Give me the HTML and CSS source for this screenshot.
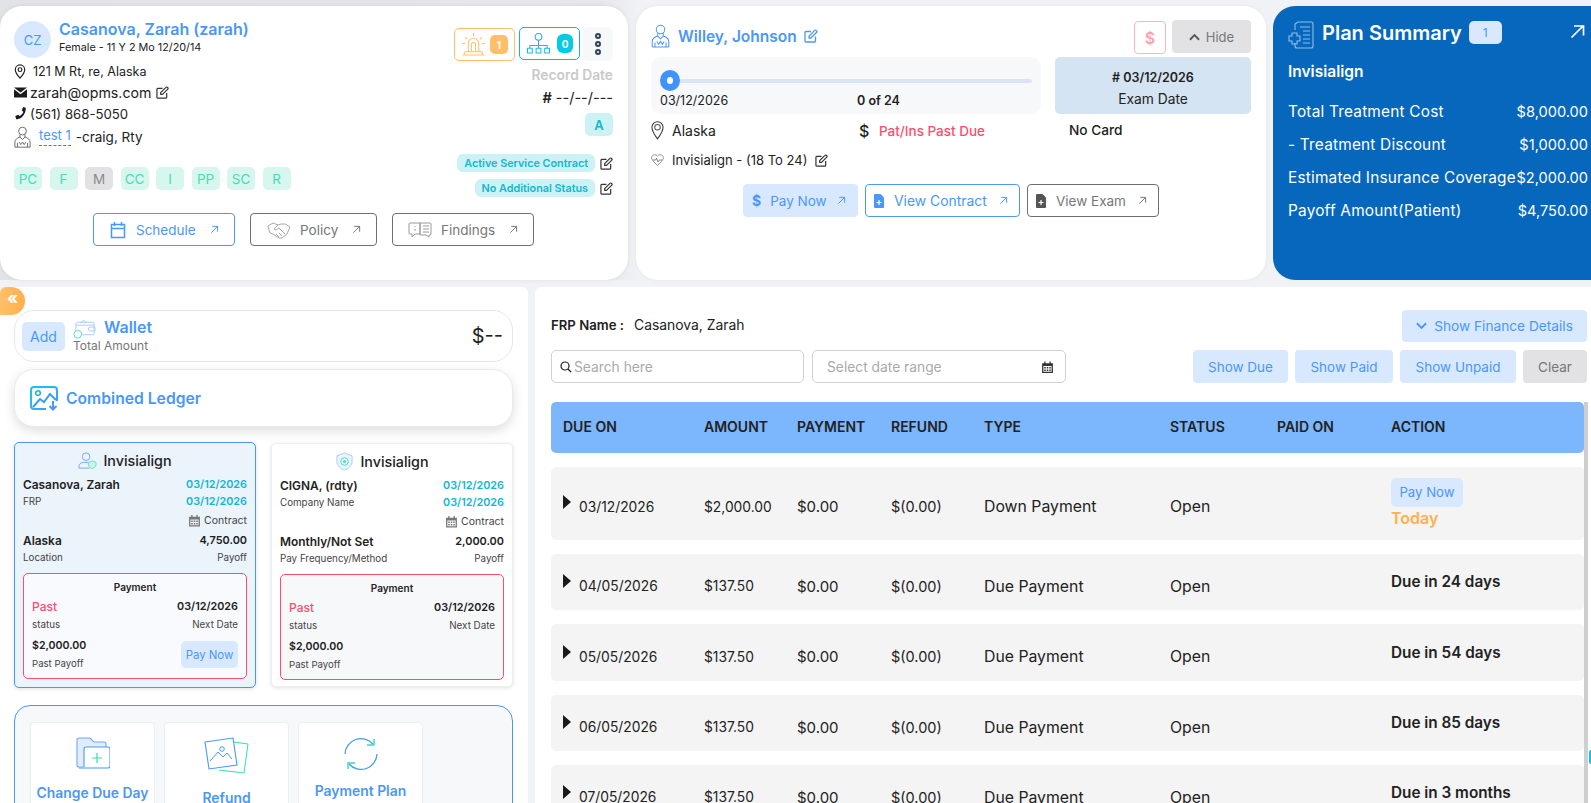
FILE: index.html
```html
<!DOCTYPE html>
<html lang="en">
<head>
<meta charset="utf-8">
<title>Patient Ledger</title>
<link rel="stylesheet" href="styles.css">
</head>
<body>
<svg class="defs" width="0" height="0" aria-hidden="true">
  <symbol id="edit" viewBox="0 0 14 14"><path d="M11.5 7.5V12a1 1 0 0 1-1 1H2a1 1 0 0 1-1-1V3.5a1 1 0 0 1 1-1h5M5 7.2 10.7 1.4a1 1 0 0 1 1.5 0l.5.5a1 1 0 0 1 0 1.4L7 9H5z" fill="none" stroke="currentColor" stroke-width="1.3" stroke-linejoin="round"/></symbol>
  <symbol id="ext" viewBox="0 0 10 10"><path d="M1.5 8.5 8.5 1.5M2.5 1.5h6v6" fill="none" stroke="currentColor" stroke-width="1.1"/></symbol>
  <symbol id="doc" viewBox="0 0 20 26"><circle cx="10" cy="6" r="4.6" fill="none" stroke="currentColor" stroke-width="1.1"/><path d="M7 10v3l3 3 3-3v-3M1 25v-6c0-3 3-5 6-6M19 25v-6c0-3-3-5-6-6M1 25h18M4 25v-5M16 25v-5M6 19l2 3 2-3 2 3 2-3" fill="none" stroke="currentColor" stroke-width="1.1"/></symbol>
  <symbol id="cal" viewBox="0 0 12 12"><path d="M1 2.5h2V1h1.2v1.5h3.6V1H9v1.5h2V11.5H1zM2.2 5v5.3h7.6V5z" fill="currentColor"/><path d="M3 6h1.4v1.4H3zM5.3 6h1.4v1.4H5.3zM7.6 6H9v1.4H7.6zM3 8.3h1.4v1.4H3zM5.3 8.3h1.4v1.4H5.3zM7.6 8.3H9v1.4H7.6z" fill="currentColor"/></symbol>
</svg>

<section class="top">
  <article class="card patient">
    <div class="patient-grid">
      <div class="patient-left">
        <div class="identity">
          <div class="avatar">CZ</div>
          <div>
            <div class="name">Casanova, Zarah (zarah)</div>
            <div class="sub">Female - 11 Y 2 Mo 12/20/14</div>
          </div>
        </div>
        <div class="info info-addr">
          <svg class="ico-addr" viewBox="0 0 12 16"><path d="M6 15S1 9.5 1 6a5 5 0 0 1 10 0c0 3.500-5 9-5 9z" fill="none" stroke="#222" stroke-width="1.300"/><circle cx="6" cy="6" r="2" fill="none" stroke="#222" stroke-width="1.300"/></svg>
          <span>121 M Rt, re, Alaska</span>
        </div>
        <div class="info info-mail">
          <svg class="ico-mail" viewBox="0 0 13 10"><path d="M0 0h13L6.500 5zM0 1.800l6.500 5 6.500-5V10H0z" fill="#1a1a1a"/></svg>
          <span>zarah@opms.com</span>
          <svg class="ico-edit"><use href="#edit"/></svg>
        </div>
        <div class="info info-phone">
          <svg class="ico-mail" viewBox="0 0 13 15"><path d="M12.500 1 9.500 0 8 4l1.800 1.500C9 7.800 7.500 9.500 5.500 10.500L4 9 .5 10.500 1.500 14c6 1 11.500-6 11-13z" fill="#1a1a1a"/></svg>
          <span>(561) 868-5050</span>
        </div>
        <div class="info info-doc">
          <svg class="ico-doc"><use href="#doc"/></svg>
          <span class="link-dash">test 1</span><span>-craig, Rty</span>
        </div>
        <div class="chips">
          <span class="chip">PC</span><span class="chip">F</span><span class="chip chip-off">M</span><span class="chip">CC</span><span class="chip">I</span><span class="chip">PP</span><span class="chip">SC</span><span class="chip">R</span>
        </div>
      </div>
      <div class="patient-right">
        <div class="alerts">
          <div class="alert alert-orange">
            <svg class="ico-siren" viewBox="0 0 24 24"><path d="M7 19V11a5 5 0 0 1 10 0v8M4 19h16l1.500 3h-19zM10 19v-7a2 2 0 0 1 4 0v7M12 1v3M4 5l2 2M20 5l-2 2M1 11h3M20 11h3" fill="none" stroke="#ffc069" stroke-width="1"/></svg>
            <span class="count count-orange">1</span>
          </div>
          <div class="alert alert-cyan">
            <svg class="ico-org" viewBox="0 0 26 24"><circle cx="13" cy="5" r="3.500" fill="none" stroke="#35a7ea" stroke-width="1.100"/><path d="M13 8.500V14M4 17v-3h18v3M13 14v3" fill="none" stroke="#35a7ea" stroke-width="1.100"/><path d="M1.500 17h5v5h-5zM10.500 17h5v5h-5zM19.500 17h5v5h-5z" fill="none" stroke="#13c0e0" stroke-width="1.100"/></svg>
            <span class="count count-cyan">0</span>
          </div>
          <div class="dots"><i></i><i></i><i></i></div>
        </div>
        <div class="record-label">Record Date</div>
        <div class="record-value"><b>#</b> --/--/---</div>
        <div class="tag-a">A</div>
        <div class="status-row"><span class="pill">Active Service Contract</span><svg class="ico-edit dark"><use href="#edit"/></svg></div>
        <div class="status-row"><span class="pill">No Additional Status</span><svg class="ico-edit dark"><use href="#edit"/></svg></div>
      </div>
    </div>
    <div class="patient-actions">
      <a class="btn btn-blue btn-sched">
        <svg class="b-ico" viewBox="0 0 16 18"><path d="M1.500 3.500h13v13h-13zM1.500 7.500h13M4.500 1v4M11.500 1v4" fill="none" stroke="currentColor" stroke-width="1.500"/></svg>
        <span>Schedule</span><svg class="ext"><use href="#ext"/></svg>
      </a>
      <a class="btn btn-grey btn-policy">
        <svg class="b-ico wide" viewBox="0 0 24 18"><path d="M1 5l5-3 5 2 3-1 4 0 5 3-3 7-5 4-3 0-6-4-3-1zM11 4 7 8l2 1 3-2 6 6M9 13l3 3M12 12l3 3" fill="none" stroke="#a8a8a8" stroke-width="1"/></svg>
        <span>Policy</span><svg class="ext"><use href="#ext"/></svg>
      </a>
      <a class="btn btn-grey btn-find">
        <svg class="b-ico wide" viewBox="0 0 24 18"><path d="M12 2H2a1 1 0 0 0-1 1v9a1 1 0 0 0 1 1h2v3l3-3h5zM12 2h10a1 1 0 0 1 1 1v10a1 1 0 0 1-1 1h-1v2l-3-2h-6zM7 5v1M7 8v2M15 5h6M15 8h6M15 11h6" fill="none" stroke="#9a9a9a" stroke-width="1"/></svg>
        <span>Findings</span><svg class="ext"><use href="#ext"/></svg>
      </a>
    </div>
  </article>

  <article class="card contract">
    <div class="contract-head">
      <div class="doctor">
        <svg class="ico-doctor"><use href="#doc"/></svg>
        <span class="doctor-name">Willey, Johnson</span>
        <svg class="ico-edit blue"><use href="#edit"/></svg>
      </div>
      <div class="head-btns">
        <span class="dollar-btn">$</span>
        <span class="hide-btn"><svg viewBox="0 0 12 8" class="chev"><path d="M1 7l5-5 5 5" fill="none" stroke="#555" stroke-width="2"/></svg>Hide</span>
      </div>
    </div>
    <div class="contract-grid">
      <div class="progress-box">
        <div class="track"><span class="knob"></span></div>
        <div class="progress-text"><span class="p-date">03/12/2026</span><b>0 of 24</b></div>
      </div>
      <div class="exam-box"><b># 03/12/2026</b><span>Exam Date</span></div>
    </div>
    <div class="meta">
      <div class="meta-loc">
        <svg class="ico-pin" viewBox="0 0 14 20"><path d="M7 19.500S1 11.500 1 7a6 6 0 0 1 12 0c0 4.500-6 12.500-6 12.500z" fill="none" stroke="#333" stroke-width="1.100"/><circle cx="7" cy="7" r="3" fill="none" stroke="#555" stroke-width="1.100"/></svg>
        <span>Alaska</span>
      </div>
      <div class="meta-due"><span class="big-dollar">$</span><span class="due-text">Pat/Ins Past Due</span></div>
      <div class="meta-card">No Card</div>
    </div>
    <div class="plan-row">
      <svg class="ico-heart" viewBox="0 0 14 14"><path d="M7 13 1.800 7.500C-.5 5 1 1.300 4 1.300c1.300 0 2.300.7 3 1.700.7-1 1.700-1.700 3-1.700 3 0 4.500 3.700 2.200 6.200z" fill="none" stroke="#888" stroke-width="1"/><path d="M2 7h3l1-2 1.500 4L9 7h3" fill="none" stroke="#5a5a5a" stroke-width=".8"/></svg>
      <span>Invisialign - (18 To 24)</span>
      <svg class="ico-edit dark"><use href="#edit"/></svg>
    </div>
    <div class="contract-actions">
      <a class="btn btn-fill btn-pay"><span class="pay-d">$</span><span>Pay Now</span><svg class="ext"><use href="#ext"/></svg></a>
      <a class="btn btn-blue btn-view"><svg class="file-ico" viewBox="0 0 10 14"><path d="M0 1a1 1 0 0 1 1-1h5.500L10 3.500V13a1 1 0 0 1-1 1H1a1 1 0 0 1-1-1z" fill="currentColor"/><path d="M5 6v5M2.500 8.500h5" stroke="#fff" stroke-width="1.200"/></svg><span>View Contract</span><svg class="ext"><use href="#ext"/></svg></a>
      <a class="btn btn-grey btn-exam"><svg class="file-ico" viewBox="0 0 10 14"><path d="M0 1a1 1 0 0 1 1-1h5.500L10 3.500V13a1 1 0 0 1-1 1H1a1 1 0 0 1-1-1z" fill="#555"/><path d="M5 6v5M2.500 8.500h5" stroke="#fff" stroke-width="1.200"/></svg><span>View Exam</span><svg class="ext"><use href="#ext"/></svg></a>
    </div>
  </article>

  <article class="summary">
    <div class="sum-head">
      <svg class="sum-ico" viewBox="0 0 26 28"><path d="M7 9V3l3-2h13a2 2 0 0 1 2 2v22a2 2 0 0 1-2 2H9a2 2 0 0 1-2-2v-3M12 6h10M15 10h7M15 14h7M15 18h7M15 22h7M4 12h5v3h3v5H9v3H4v-3H1v-5h3z" fill="none" stroke="#8fc0ea" stroke-width="1.100"/></svg>
      <h2>Plan Summary</h2>
      <span class="sum-badge">1</span>
      <svg class="sum-ext" viewBox="0 0 15 15"><path d="M1.500 13.500 13 2M4 2h9.500v9.500" fill="none" stroke="#fff" stroke-width="1.700"/></svg>
    </div>
    <div class="sum-plan">Invisialign</div>
    <dl class="sum-list">
      <div><dt>Total Treatment Cost</dt><dd>$8,000.00</dd></div>
      <div><dt>- Treatment Discount</dt><dd>$1,000.00</dd></div>
      <div><dt>Estimated Insurance Coverage</dt><dd>$2,000.00</dd></div>
      <div><dt>Payoff Amount(Patient)</dt><dd>$4,750.00</dd></div>
    </dl>
  </article>
</section>

<main class="main">
  <aside class="left">
    <button class="collapse" type="button">«</button>
    <div class="wallet">
      <span class="add">Add</span>
      <div class="wallet-text">
        <div class="wallet-top">
          <svg class="wallet-ico" viewBox="0 0 24 20"><path d="M3 14V5a2 2 0 0 1 2-2h16a1 1 0 0 1 1 1v11a1 1 0 0 1-1 1H9M3 6h19M8 3l3-2 3 2M18 8h5v4h-5a2 2 0 0 1 0-4z" fill="none" stroke="#a8cdfc" stroke-width="1"/><circle cx="5" cy="15.500" r="4" fill="#fff" stroke="#4fdcc0" stroke-width="1"/></svg>
          <span class="wallet-title">Wallet</span>
        </div>
        <div class="wallet-sub">Total Amount</div>
      </div>
      <div class="wallet-amt">$--</div>
    </div>
    <div class="ledger">
      <svg class="ledger-ico" viewBox="0 0 28 25"><defs><linearGradient id="lg" x1="0" y1="0" x2="1" y2="1"><stop offset="0" stop-color="#13c8ea"/><stop offset="1" stop-color="#4a97fb"/></linearGradient></defs><path d="M16 23H4a3 3 0 0 1-3-3V4a3 3 0 0 1 3-3h20a3 3 0 0 1 3 3v11" fill="none" stroke="url(#lg)" stroke-width="2"/><circle cx="8" cy="7" r="2.300" fill="none" stroke="#13b5e0" stroke-width="1.500"/><path d="M3 21l7-8 4 3 6-8 6 6" fill="none" stroke="#3a9cf5" stroke-width="2"/><path d="M23 15v8M19.500 20l3.500 3.500 3.500-3.500" fill="none" stroke="#4a97fb" stroke-width="2"/></svg>
      <span>Combined Ledger</span>
    </div>

    <div class="plans">
      <div class="plan plan-active">
        <div class="plan-title">
          <svg class="plan-ico" viewBox="0 0 20 18"><circle cx="8.500" cy="5" r="4" fill="none" stroke="#6fa9fb" stroke-width="1"/><path d="M1 17v-1.500A5 5 0 0 1 6 11h5" fill="none" stroke="#6fa9fb" stroke-width="1"/><path d="M1 17h11" stroke="#6fa9fb"/><path d="M15 9.500l4 1.500v2.500c0 2-2 3.500-4 4-2-.5-4-2-4-4V11z" fill="#c8f3e6" stroke="#4fdcc0" stroke-width=".8"/></svg>
          <span>Invisialign</span>
        </div>
        <div class="pl-row"><b>Casanova, Zarah</b><b class="teal">03/12/2026</b></div>
        <div class="pl-row pl-mid"><small>FRP</small><b class="teal">03/12/2026</b></div>
        <div class="pl-row pl-end"><svg class="mini-cal"><use href="#cal"/></svg><small>Contract</small></div>
        <div class="pl-row pl-third"><b>Alaska</b><b>4,750.00</b></div>
        <div class="pl-row pl-sub"><small>Location</small><small>Payoff</small></div>
        <div class="pay-box">
          <div class="pay-title">Payment</div>
          <div class="pl-row"><b class="past">Past</b><b>03/12/2026</b></div>
          <div class="pl-row pl-sub"><small>status</small><small>Next Date</small></div>
          <div class="pay-foot">
            <div><b>$2,000.00</b><small>Past Payoff</small></div>
            <span class="mini-pay">Pay Now</span>
          </div>
        </div>
      </div>
      <div class="plan">
        <div class="plan-title">
          <svg class="plan-ico" viewBox="0 0 18 20"><path d="M9 1l8 3v6c0 4.500-4 8-8 9-4-1-8-4.500-8-9V4z" fill="#eaf3ff" stroke="#a8cdfc" stroke-width="1"/><circle cx="9" cy="10" r="4" fill="none" stroke="#4fdcc0" stroke-width="1"/><circle cx="9" cy="10" r="1.600" fill="#4fdcc0"/></svg>
          <span>Invisialign</span>
        </div>
        <div class="pl-row"><b>CIGNA, (rdty)</b><b class="teal">03/12/2026</b></div>
        <div class="pl-row pl-mid"><small>Company Name</small><b class="teal">03/12/2026</b></div>
        <div class="pl-row pl-end"><svg class="mini-cal"><use href="#cal"/></svg><small>Contract</small></div>
        <div class="pl-row pl-third"><b>Monthly/Not Set</b><b>2,000.00</b></div>
        <div class="pl-row pl-sub"><small>Pay Frequency/Method</small><small>Payoff</small></div>
        <div class="pay-box">
          <div class="pay-title">Payment</div>
          <div class="pl-row"><b class="past">Past</b><b>03/12/2026</b></div>
          <div class="pl-row pl-sub"><small>status</small><small>Next Date</small></div>
          <div class="pay-foot">
            <div><b>$2,000.00</b><small>Past Payoff</small></div>
          </div>
        </div>
      </div>
    </div>

    <div class="tools">
      <div class="tool">
        <svg class="tool-ico" viewBox="0 0 34 34"><path d="M8 30H3a2 2 0 0 1-2-2V3a2 2 0 0 1 2-2h11l4 4h10a2 2 0 0 1 2 2v3" fill="#e1edff" stroke="#6fa9fb" stroke-width="1.100"/><path d="M8 30V12a2 2 0 0 1 2-2h22a2 2 0 0 1 2 2v17a2 2 0 0 1-2 2H3" fill="#fff" stroke="#4a97fb" stroke-width="1.100"/><path d="M21 16v10M16 21h10" stroke="#36dcb4" stroke-width="1.200"/></svg>
        <span class="tool-label">Change Due Day</span>
      </div>
      <div class="tool">
        <svg class="tool-ico tool-img" viewBox="0 0 46 38"><path d="M30 5l14 2-4 29-25-3" fill="none" stroke="#36dcb4" stroke-width="1"/><path d="M1 5l28-4 4 27-28 4z" fill="#fff" stroke="#4a97fb" stroke-width="1.100"/><path d="M6 24l8-9 5 5 4-4 5 6" fill="none" stroke="#4a97fb" stroke-width="1"/><circle cx="18" cy="12" r="2.300" fill="none" stroke="#4a97fb"/></svg>
        <span class="tool-label tool-low">Refund</span>
      </div>
      <div class="tool">
        <svg class="tool-ico" viewBox="0 0 34 34"><path d="M1 17A16 16 0 0 1 29 7M33 17A16 16 0 0 1 5 27" fill="none" stroke="#4a97fb" stroke-width="1.300"/><path d="M30 2v6h-7M4 32v-6h7" fill="none" stroke="#36dcb4" stroke-width="1.400"/></svg>
        <span class="tool-label tool-up">Payment Plan</span>
      </div>
    </div>
  </aside>

  <section class="right">
    <div class="frp-row">
      <div class="frp"><b>FRP Name :</b><span>Casanova, Zarah</span></div>
      <span class="soft-btn finance"><svg viewBox="0 0 12 8" class="chev"><path d="M1 1l5 5 5-5" fill="none" stroke="#4a97fb" stroke-width="2"/></svg>Show Finance Details</span>
    </div>
    <div class="filter-row">
      <div class="field field-search">
        <svg class="mag" viewBox="0 0 12 12"><circle cx="5" cy="5" r="4" fill="none" stroke="#222" stroke-width="1.200"/><path d="M8 8l3 3" stroke="#222" stroke-width="1.200"/></svg>
        <span>Search here</span>
      </div>
      <div class="field field-date"><span>Select date range</span><svg class="date-cal"><use href="#cal"/></svg></div>
      <div class="filter-btns">
        <span class="soft-btn f-due">Show Due</span>
        <span class="soft-btn f-paid">Show Paid</span>
        <span class="soft-btn f-unpaid">Show Unpaid</span>
        <span class="soft-btn f-clear">Clear</span>
      </div>
    </div>
    <div class="table">
      <div class="thead grid">
        <span>DUE ON</span><span>AMOUNT</span><span>PAYMENT</span><span>REFUND</span><span>TYPE</span><span>STATUS</span><span>PAID ON</span><span>ACTION</span>
      </div>
      <div class="trow grid r-first">
        <span class="due"><i class="tri"></i><span>03/12/2026</span></span><span>$2,000.00</span><span class="c-pay">$0.00</span><span class="c-ref">$(0.00)</span><span class="c-wide">Down Payment</span><span class="c-wide">Open</span><span></span>
        <span class="act"><em class="tbl-pay">Pay Now</em><em class="today">Today</em></span>
      </div>
      <div class="trow grid">
        <span class="due"><i class="tri"></i><span>04/05/2026</span></span><span>$137.50</span><span class="c-pay">$0.00</span><span class="c-ref">$(0.00)</span><span class="c-wide">Due Payment</span><span class="c-wide">Open</span><span></span><span class="act"><b>Due in 24 days</b></span>
      </div>
      <div class="trow grid r-tall">
        <span class="due"><i class="tri"></i><span>05/05/2026</span></span><span>$137.50</span><span class="c-pay">$0.00</span><span class="c-ref">$(0.00)</span><span class="c-wide">Due Payment</span><span class="c-wide">Open</span><span></span><span class="act"><b>Due in 54 days</b></span>
      </div>
      <div class="trow grid">
        <span class="due"><i class="tri"></i><span>06/05/2026</span></span><span>$137.50</span><span class="c-pay">$0.00</span><span class="c-ref">$(0.00)</span><span class="c-wide">Due Payment</span><span class="c-wide">Open</span><span></span><span class="act"><b>Due in 85 days</b></span>
      </div>
      <div class="trow grid">
        <span class="due"><i class="tri"></i><span>07/05/2026</span></span><span>$137.50</span><span class="c-pay">$0.00</span><span class="c-ref">$(0.00)</span><span class="c-wide">Due Payment</span><span class="c-wide">Open</span><span></span><span class="act"><b>Due in 3 months</b></span>
      </div>
    </div>
    <span class="scrollbar"></span>
    <span class="edge-dot"></span>
  </section>
</main>
</body>
</html>
```

FILE: styles.css
```css
* { box-sizing: border-box; }
html, body { margin: 0; height: 803px; overflow: hidden; }
body {
  background: #f1f2f6;
  font-family: Inter, "Open Sans", "Liberation Sans", sans-serif;
  color: #222;
  font-size: 13px;
  width: 1591px;
}
.defs { position: absolute; }
svg { display: block; flex: none; }
b { font-weight: 600; }
em { font-style: normal; }

/* ---------- top row ---------- */
.top {
  display: grid;
  grid-template-columns: 628px 630px 318px;
  column-gap: 8px;
  height: 280px;
  padding-top: 6px;
  background: linear-gradient(90deg, #e2e3e7 0, #e6e7ea 600px, #f1f2f6 640px);
}
.top > * { height: 274px; }
.card { background: #fff; border-radius: 22px; }

/* patient card */
.patient { padding: 15px 15px 0 14px; box-shadow: 0 0 4px rgba(0,0,0,.08); }
.patient-grid { display: flex; justify-content: space-between; height: 192px; }
.patient-left { width: 300px; }
.identity { display: flex; gap: 8px; height: 37px; }
.avatar {
  width: 37px; height: 37px; border-radius: 50%;
  background: #d8e9ff; color: #4a97fb; font-size: 13px;
  display: flex; align-items: center; justify-content: center;
}
.name { color: #4a97fb; font-size: 16px; font-weight: 600; line-height: 19px; margin-top: -1px; white-space: nowrap; }
.sub { font-size: 10.800px; line-height: 15px; margin-top: 1px; white-space: nowrap; }
.info { display: flex; align-items: center; height: 21px; gap: 3px; font-size: 12.500px; white-space: nowrap; }
.info-addr { margin-top: 3px; gap: 7px; }
.info-mail { font-size: 14.200px; }
.info-phone { font-size: 13.200px; }
.ico-addr { width: 12px; height: 15px; }
.ico-mail { width: 13px; height: 13px; }
.ico-edit { width: 13px; height: 13px; margin-left: 2px; color: #333; }
.ico-edit.dark { color: #333; }
.ico-edit.blue { color: #4a97fb; width: 14px; height: 14px; margin-left: 7px; }
.info-doc { height: 23px; margin-top: 1px; font-size: 13.500px; }
.ico-doc { width: 17px; height: 22px; color: #666; margin-right: 4px; }
.link-dash { color: #4a97fb; border-bottom: 1px dashed #2f7cf0; margin: 0 2px 0 1px; line-height: 17px; padding-bottom: 1px; font-size: 13px; }
.chips { display: flex; gap: 7.500px; margin-top: 19px; }
.chip {
  width: 28px; height: 23px; border-radius: 5px;
  background: #d6f6ee; color: #48dcb6; font-size: 13.500px;
  display: flex; align-items: center; justify-content: center;
}
.chip-off { background: #e2e2e4; color: #8a8a8a; }

.patient-right { width: 170px; display: flex; flex-direction: column; align-items: flex-end; }
.alerts { display: flex; gap: 3px; height: 34px; align-items: flex-start; margin-top: 6px; }
.alert { height: 33px; width: 61px; border: 1px solid; border-radius: 5px; display: flex; align-items: center; padding: 0 6px; justify-content: space-between; }
.alert-orange { border-color: #ffc069; margin-top: 1px; margin-right: 1px; }
.alert-cyan { border-color: #13b5d0; }
.ico-siren { width: 25px; height: 25px; }
.ico-org { width: 25px; height: 23px; }
.count { color: #fff; font-weight: 700; font-size: 10px; display: flex; align-items: center; justify-content: center; border-radius: 5px; }
.count-orange { width: 18px; height: 19px; background: #ffbf66; }
.count-cyan { width: 16px; height: 19px; background: #03cbe4; border-radius: 6px; }
.dots { width: 30px; height: 34px; background: #f7f8fa; border-radius: 5px; display: flex; flex-direction: column; gap: 2px; align-items: center; justify-content: center; }
.dots i { width: 6px; height: 6px; border: 2px solid #33415c; border-radius: 50%; }
.record-label { color: #c9c9c9; font-weight: 600; font-size: 13.800px; line-height: 16px; margin-top: 6px; white-space: nowrap; }
.record-value { font-size: 14.500px; line-height: 18px; margin-top: 6px; white-space: nowrap; }
.tag-a { width: 28px; height: 23px; margin-top: 6px; background: #cdf2f5; color: #10b8d0; font-weight: 600; font-size: 13px; border-radius: 5px; display: flex; align-items: center; justify-content: center; }
.status-row { display: flex; align-items: center; gap: 3px; }
.status-row + .status-row { margin-top: 7px; }
.tag-a + .status-row { margin-top: 18px; }
.pill { background: #cdf2f5; color: #10b8d0; font-size: 10.800px; font-weight: 600; height: 18px; padding: 0 7px; border-radius: 6px; display: flex; align-items: center; white-space: nowrap; }

.patient-actions { display: flex; gap: 15px; padding-left: 79px; }
.btn { height: 33px; border: 1px solid; border-radius: 4px; display: inline-flex; align-items: center; font-size: 13.500px; white-space: nowrap; }
.btn-blue { border-color: #4a97fb; color: #4a97fb; }
.btn-grey { border-color: #6b6f76; color: #777; }
.btn-fill { background: #d8e9ff; border-color: #d8e9ff; color: #4a97fb; }
.b-ico { width: 16px; height: 18px; }
.b-ico.wide { width: 24px; height: 18px; }
.ext { width: 9px; height: 9px; margin-left: auto; }
.btn-sched { width: 142px; padding: 0 15px 0 16px; gap: 10px; }
.btn-policy { width: 127px; padding: 0 15px 0 16px; gap: 9px; }
.btn-find { width: 142px; padding: 0 15px 0 15px; gap: 9px; }

/* contract card */
.contract { padding: 14px 15px 0; box-shadow: 0 0 4px rgba(0,0,0,.05); }
.contract-head { display: flex; justify-content: space-between; height: 37px; align-items: flex-start; }
.doctor { display: flex; align-items: center; margin-top: 4px; }
.ico-doctor { width: 19px; height: 24px; color: #4a97fb; margin-right: 8px; }
.doctor-name { color: #4a97fb; font-size: 15.500px; font-weight: 600; white-space: nowrap; }
.head-btns { display: flex; gap: 6px; }
.dollar-btn { width: 32px; height: 33px; margin-top: 1px; border: 1px solid #ffb3c0; border-radius: 4px; color: #ff9fb2; font-weight: 600; font-size: 16px; display: flex; align-items: center; justify-content: center; }
.hide-btn { width: 79px; height: 33px; background: #e2e2e4; color: #777; border-radius: 4px; display: flex; align-items: center; justify-content: center; gap: 6px; font-size: 13px; }
.chev { width: 11px; height: 8px; }
.contract-grid { display: grid; grid-template-columns: 390px 196px; column-gap: 14px; height: 57px; }
.progress-box { background: #f7f8fa; border-radius: 10px; padding: 13px 9px 0; }
.track { height: 4px; background: #dbe4f5; margin-top: 9px; border-radius: 2px; position: relative; }
.knob { position: absolute; left: 0; top: -9px; width: 20px; height: 21px; border-radius: 50%; background: #fff; border: 7px solid #3f93fa; }
.progress-text { display: flex; margin-top: 10px; font-size: 12.500px; line-height: 16px; }
.p-date { width: 197px; }
.exam-box { background: #d5e4f3; border-radius: 5px; display: flex; flex-direction: column; align-items: center; }
.exam-box b { font-size: 12.500px; line-height: 16px; margin-top: 13px; }
.exam-box span { font-size: 13.800px; line-height: 16px; margin-top: 5px; }
.meta { display: grid; grid-template-columns: 208px 210px 1fr; height: 31px; align-items: center; }
.meta-loc { display: flex; align-items: center; gap: 8px; font-size: 14px; margin-top: 1px; }
.ico-pin { width: 13px; height: 20px; }
.meta-due { display: flex; align-items: center; gap: 9px; margin-top: 3px; }
.big-dollar { font-size: 16px; font-weight: 500; width: 11px; }
.due-text { color: #ff4d6d; font-weight: 500; font-size: 13.500px; white-space: nowrap; }
.meta-card { font-size: 13.700px; font-weight: 500; }
.plan-row { display: flex; align-items: center; gap: 8px; height: 26px; margin-top: 2px; font-size: 13px; }
.ico-heart { width: 13px; height: 14px; }
.plan-row .ico-edit { margin-left: 0; }
.contract-actions { display: flex; gap: 7px; padding-left: 92px; margin-top: 11px; }
.btn-pay { width: 115px; padding: 0 11px 0 8px; gap: 9px; }
.pay-d { font-weight: 700; font-size: 14px; }
.btn-view { width: 155px; padding: 0 11px 0 8px; gap: 10px; font-size: 13.900px; }
.btn-exam { width: 132px; padding: 0 11px 0 8px; gap: 10px; }
.file-ico { width: 10px; height: 14px; }

/* summary */
.summary { background: #0767bd; color: #fff; border-radius: 22px 0 0 22px; padding: 15px 3px 0 15px; margin-left: -1px; width: 318px; }
.sum-head { display: flex; align-items: flex-start; height: 28px; position: relative; }
.sum-ico { width: 26px; height: 28px; margin-right: 8px; }
.sum-head h2 { margin: 0; font-size: 20px; font-weight: 600; line-height: 24px; white-space: nowrap; }
.sum-badge { width: 33px; height: 23px; margin-left: 7px; background: #d8e9ff; color: #4a97fb; border-radius: 5px; display: flex; align-items: center; justify-content: center; font-size: 12px; }
.sum-ext { width: 15px; height: 15px; margin-left: auto; margin-right: 3px; margin-top: 3px; }
.sum-plan { font-weight: 600; font-size: 15.500px; line-height: 18px; margin-top: 14px; }
.sum-list { margin: 0; padding: 0; }
.sum-list div { display: flex; justify-content: space-between; height: 33px; align-items: center; font-size: 15.400px; letter-spacing: .2px; white-space: nowrap; }
.sum-list div:first-child { margin-top: 14px; }
.sum-list dt, .sum-list dd { margin: 0; }
.sum-list dd { font-size: 14.600px; letter-spacing: 0; }

/* ---------- main ---------- */
.main { display: flex; height: 516px; margin-top: 7px; gap: 7px; }
.left { width: 528px; height: 516px; background: #fff; border-radius: 6px 6px 0 0; padding: 23px 15px 0 14px; position: relative; overflow: hidden; }
.collapse {
  position: absolute; left: 0; top: 0; width: 25px; height: 28px; border: 0; padding: 0 0 6px;
  border-radius: 0 14px 14px 0; background: linear-gradient(90deg, #ffc069, #ffae4d);
  color: #fff; font-size: 17px; font-weight: 700; line-height: 1; font-family: Inter, sans-serif;
}
.wallet { height: 52px; border: 1px solid #e2e7ef; border-radius: 20px; display: flex; align-items: center; padding: 0 9px 0 7px; gap: 9px; }
.add { width: 43px; height: 29px; background: #d8e9ff; color: #4a97fb; border-radius: 5px; display: flex; align-items: center; justify-content: center; font-size: 14px; }
.wallet-text { flex: 1; margin-top: 2px; margin-left: -1px; }
.wallet-top { display: flex; gap: 8px; align-items: center; height: 20px; margin-top: -3px; }
.wallet-ico { width: 23px; height: 20px; }
.wallet-title { color: #4a97fb; font-weight: 600; font-size: 16px; margin-top: -4px; }
.wallet-sub { color: #777; font-size: 12px; line-height: 14px; }
.wallet-amt { font-size: 20px; }
.ledger { height: 58px; margin-top: 7px; background: #fff; border: 1px solid #e6eaf1; border-radius: 20px; box-shadow: 0 4px 12px rgba(0,0,0,.13); display: flex; align-items: center; padding-left: 15px; gap: 8px; color: #4a97fb; font-weight: 600; font-size: 15.700px; }
.ledger-ico { width: 28px; height: 25px; }

.plans { display: flex; gap: 15px; margin-top: 16px; }
.plan { width: 242px; height: 244px; background: #fff; border: 1px solid #eceef2; border-radius: 5px; box-shadow: 0 1px 4px rgba(0,0,0,.12); padding: 0 8px; font-size: 11px; }
.plan-active { height: 246px; background: #ebf3fb; border-color: #4a97fb; margin-top: -1px; }
.plan-title { display: flex; justify-content: center; align-items: center; gap: 6px; height: 33px; font-size: 14.300px; font-weight: 500; padding: 1px 20px 0 0; }
.plan-ico { width: 19px; height: 19px; }
.pl-row { display: flex; justify-content: space-between; align-items: center; line-height: 17px; height: 17px; white-space: nowrap; }
.pl-row b { font-size: 11.900px; font-weight: 600; }
.pl-row b.teal, .pay-box .pl-row b { font-size: 10.800px; }
.pl-third b:last-child { font-size: 10.900px; }
.teal { color: #10b8d0; }
.pl-row small { font-size: 9.800px; color: #444; }
.pl-end { justify-content: flex-end; gap: 3px; height: 20px; padding-top: 2px; }
.pl-end small { font-size: 10.500px; }
.pl-mid { height: 16px; }
.pl-third { margin-top: 1px; height: 20px; }
.pl-sub { height: 14px; }
.mini-cal { width: 13px; height: 13px; color: #777; }
.pay-box { margin-top: 9px; height: 106px; border: 1px solid #ff4d6d; border-radius: 5px; background: #f7f8fa; padding: 6px 8px 0; }
.pay-box .pl-sub { height: 18px; }
.plan-active .pay-box { background: #f8fafd; }
.pay-title { text-align: center; font-size: 10px; font-weight: 600; line-height: 14px; }
.pay-box .pl-row:nth-child(2) { margin-top: 4px; }
.pay-box .pl-row b.past { color: #ff4d6d; font-weight: 500; font-size: 12px; }
.pay-foot { display: flex; justify-content: space-between; align-items: flex-end; }
.pay-foot b, .pay-foot small { display: block; }
.pay-foot b { line-height: 17px; font-size: 10.600px; margin-top: 4px; }
.pay-foot small { font-size: 9.600px; line-height: 19px; color: #444; }
.mini-pay { width: 57px; height: 27px; background: #d8e9ff; color: #4a97fb; border-radius: 5px; display: flex; align-items: center; justify-content: center; font-size: 11.400px; margin-bottom: 5px; }
.tools { margin-top: 17px; height: 130px; border: 1px solid #4a97fb; border-radius: 16px; background: #f7f8fa; padding: 16px 15px; display: flex; gap: 9px; }
.tool { width: 125px; height: 120px; background: #fff; border: 1px solid #eceef2; border-radius: 4px; display: flex; flex-direction: column; align-items: center; padding-top: 14px; }
.tool-ico { width: 34px; height: 34px; }
.tool-img { width: 46px; height: 38px; }
.tool-label { color: #4a97fb; font-weight: 600; font-size: 13.900px; margin-top: 14px; white-space: nowrap; }
.tool-low { margin-top: 15px; }
.tool-up { margin-top: 12px; }

/* right */
.right { width: 1056px; height: 516px; background: #fff; padding: 23px 4px 0 16px; position: relative; overflow: hidden; border-radius: 6px 0 0 0; }
.frp-row { display: flex; justify-content: space-between; align-items: center; height: 32px; }
.frp { display: flex; align-items: center; gap: 10px; font-size: 13.900px; margin-top: -3px; white-space: nowrap; }
.frp b { font-weight: 600; font-size: 13.200px; }
.soft-btn { background: #d8e9ff; color: #4a97fb; border-radius: 4px; height: 33px; display: flex; align-items: center; justify-content: center; font-size: 13.500px; white-space: nowrap; }
.finance { width: 185px; height: 32px; gap: 7px; font-size: 13.700px; }
.filter-row { display: flex; gap: 8px; margin-top: 8px; }
.field { height: 33px; border: 1px solid #cdd0d6; border-radius: 5px; display: flex; align-items: center; color: #aaa; font-size: 13.800px; white-space: nowrap; }
.field-search { width: 253px; padding-left: 8px; gap: 2px; }
.mag { width: 12px; height: 12px; }
.field-date { width: 254px; padding: 0 11px 0 14px; justify-content: space-between; }
.date-cal { width: 13px; height: 14px; color: #333; }
.filter-btns { display: flex; gap: 7px; margin-left: auto; }
.f-due { width: 95px; }
.f-paid { width: 98px; }
.f-unpaid { width: 116px; }
.f-clear { width: 64px; background: #e2e2e4; color: #777; }
.table { margin-top: 19px; width: 1033px; }
.grid { display: grid; grid-template-columns: 141px 93px 94px 93px 186px 107px 114px 1fr; padding-left: 12px; align-items: center; border-radius: 5px; }
.thead { height: 51px; background: #7cb6fc; font-weight: 600; font-size: 14px; white-space: nowrap; padding-bottom: 2px; }
.trow { background: #f4f4f4; height: 56px; margin-top: 14px; font-size: 13.800px; white-space: nowrap; }
.trow > span { padding-top: 8px; }
.c-pay { font-size: 15px; }
.c-ref { font-size: 14.500px; }
.c-wide { font-size: 15.800px; }
.r-first { height: 73px; }
.r-first > span { padding-top: 6px; }
.r-tall { height: 57px; }
.due { display: flex; align-items: flex-start; gap: 8px; }
.tri { width: 0; height: 0; border-left: 8px solid #1a1a1a; border-top: 7px solid transparent; border-bottom: 7px solid transparent; margin-top: -4px; }
.trow > .act { padding-top: 0; margin-top: -1px; }
.r-first > .act { padding-top: 0; margin-top: -2px; display: flex; flex-direction: column; align-items: flex-start; }
.act b { font-weight: 600; font-size: 15.300px; }
.tbl-pay { width: 72px; height: 29px; background: #d8e9ff; color: #4a97fb; border-radius: 5px; display: flex; align-items: center; justify-content: center; font-size: 13.200px; }
.today { color: #ffb04d; font-weight: 600; font-size: 16px; line-height: 20px; margin-top: 1px; }
.scrollbar { position: absolute; left: 1049px; top: 115px; width: 4px; height: 401px; background: #cfcfcf; }
.edge-dot { position: absolute; right: 0; top: 463px; width: 2px; height: 14px; background: #12c4e0; border-radius: 2px 0 0 2px; }
```
